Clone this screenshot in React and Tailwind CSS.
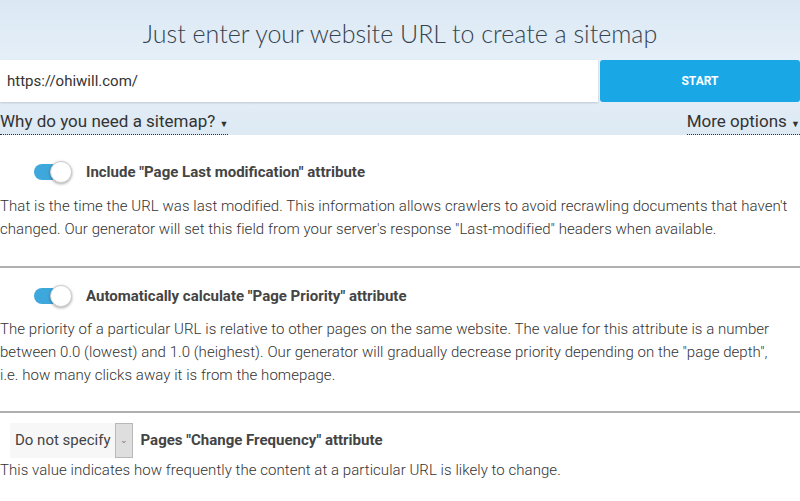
import React from 'react';

const Toggle = () => (
  <span className="relative inline-flex h-[20px] w-[38px] shrink-0 items-center">
    <span className="absolute left-0 right-[2px] h-[16px] rounded-full bg-[#3ea8dd]" />
    <span className="absolute right-0 h-[22px] w-[22px] rounded-full border border-[#cfcfcf] bg-white shadow-[0_1px_3px_rgba(0,0,0,0.35)]" />
  </span>
);

const Option = ({ title, control, children }) => (
  <div>
    <div className="flex items-center">{control}<span className="text-[15px] font-bold text-[#444]">{title}</span></div>
    <p className="mt-[11px] text-[15px] font-light leading-[23px] tracking-[0.05px] text-[#333]">{children}</p>
  </div>
);

const App = () => {
  return (
    <div className="h-[501px] w-[800px] overflow-hidden bg-white" style={{ fontFamily: 'Roboto, "Noto Sans", sans-serif' }}>
      <div className="h-[135px] bg-gradient-to-b from-[#dbe8f3] via-[#e6f0f9] to-[#dde9f3]">
        <h1 className="pt-[17px] text-center text-[25px] font-light leading-[32px] text-[#36434e]" style={{ fontFamily: 'Lato, sans-serif' }}>
          Just enter your website URL to create a sitemap
        </h1>
        <div className="mt-[11px] flex h-[42px]">
          <div className="flex w-[598px] items-center bg-white pl-[7px] text-[15px] text-[#333] shadow-[0_1px_2px_rgba(0,0,0,0.15)]">
            https://ohiwill.com/
          </div>
          <button className="ml-[2px] flex-1 rounded-[3px] bg-[#19a7e6] text-[12px] font-bold text-white">
            START
          </button>
        </div>
        <div className="flex h-[33px] items-end justify-between text-[17px] text-[#333]">
          <span className="border-b border-dotted border-[#333] leading-[20px]">
            Why do you need a sitemap? <span className="text-[9px]">▼</span>
          </span>
          <span className="border-b border-dotted border-[#333] leading-[20px]">
            More options <span className="text-[9px]">▼</span>
          </span>
        </div>
      </div>

      <div className="border-b-2 border-[#b0b0b0] pt-[26px] pb-[25px]">
        <Option
          control={<span className="ml-[34px] mr-[14px] flex"><Toggle /></span>}
          title={'Include "Page Last modification" attribute'}
        >
          That is the time the URL was last modified. This information allows crawlers to avoid recrawling documents that haven't
          changed. Our generator will set this field from your server's response "Last-modified" headers when available.
        </Option>
      </div>

      <div className="border-b-2 border-[#b0b0b0] pt-[17px] pb-[24px]">
        <Option
          control={<span className="ml-[34px] mr-[14px] flex"><Toggle /></span>}
          title={'Automatically calculate "Page Priority" attribute'}
        >
          The priority of a particular URL is relative to other pages on the same website. The value for this attribute is a number
          between 0.0 (lowest) and 1.0 (heighest). Our generator will gradually decrease priority depending on the "page depth",
          <br />
          i.e. how many clicks away it is from the homepage.
        </Option>
      </div>

      <div className="pt-[10px]">
        <div className="flex items-center">
          <div className="ml-[10px] mr-[8px] flex h-[35px] items-stretch bg-[#f7f7f7]">
            <span className="flex items-center pl-[5px] pr-[4px] text-[15px] text-[#444]">Do not specify</span>
            <span className="flex w-[18px] items-center justify-center border border-[#b8b8b8] bg-[#dedede] text-[9px] text-[#777]">⌄</span>
          </div>
          <span className="text-[15px] font-bold text-[#444]">Pages "Change Frequency" attribute</span>
        </div>
        <p className="mt-[1px] text-[15px] font-light leading-[23px] tracking-[0.05px] text-[#333]">
          This value indicates how frequently the content at a particular URL is likely to change.
        </p>
      </div>
    </div>
  );
};

export default App;
